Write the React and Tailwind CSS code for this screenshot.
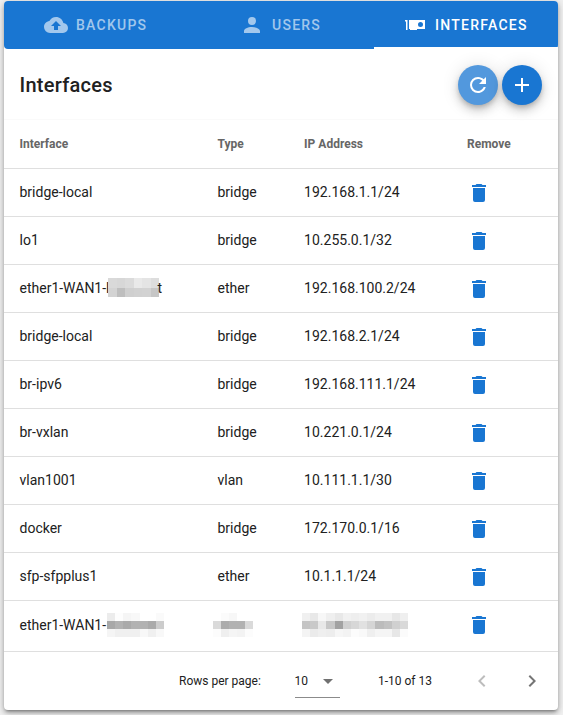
const ICONS = {
  cloud: "M14,13V17H10V13H7L12,8L17,13M19.35,10.03C18.67,6.59 15.64,4 12,4C9.11,4 6.6,5.64 5.35,8.03C2.34,8.36 0,10.9 0,14A6,6 0 0,0 6,20H19A5,5 0 0,0 24,15C24,12.36 21.95,10.22 19.35,10.03Z",
  account: "M12,4A4,4 0 0,1 16,8A4,4 0 0,1 12,12A4,4 0 0,1 8,8A4,4 0 0,1 12,4M12,14C16.42,14 20,15.79 20,18V20H4V18C4,15.79 7.58,14 12,14Z",
  card: "M2,7V8.5H3V17H4.5V7C3.7,7 2.8,7 2,7M6,7V7L6,16H7V17H14V16H22V7H6M17.5,9A2.5,2.5 0 0,1 20,11.5A2.5,2.5 0 0,1 17.5,14A2.5,2.5 0 0,1 15,11.5A2.5,2.5 0 0,1 17.5,9Z",
  refresh: "M17.65,6.35C16.2,4.9 14.21,4 12,4A8,8 0 0,0 4,12A8,8 0 0,0 12,20C15.73,20 18.84,17.45 19.73,14H17.65C16.83,16.33 14.61,18 12,18A6,6 0 0,1 6,12A6,6 0 0,1 12,6C13.66,6 15.14,6.69 16.22,7.78L13,11H20V4L17.65,6.35Z",
  plus: "M19,13H13V19H11V13H5V11H11V5H13V11H19V13Z",
  trash: "M19,4H15.5L14.5,3H9.5L8.5,4H5V6H19M6,19A2,2 0 0,0 8,21H16A2,2 0 0,0 18,19V7H6V19Z",
  left: "M15.41,16.58L10.83,12L15.41,7.41L14,6L8,12L14,18L15.41,16.58Z",
  right: "M8.59,16.58L13.17,12L8.59,7.41L10,6L16,12L10,18L8.59,16.58Z",
  down: "M7,10L12,15L17,10H7Z",
};

function Icon({ name, className = "" }) {
  return (
    <svg viewBox="0 0 24 24" fill="currentColor" className={`size-6 shrink-0 ${className}`}>
      <path d={ICONS[name]} />
    </svg>
  );
}

// Pixelated block that hides a private value; each row lists the grey level of its cells.
function Mosaic({ rows, className }) {
  return (
    <div className={`flex shrink-0 flex-col ${className}`}>
      {rows.map((row, i) => (
        <div key={i} className="flex flex-1">
          {row.map((v, j) => (
            <div key={j} className="flex-1" style={{ backgroundColor: `rgb(${v},${v},${v})` }} />
          ))}
        </div>
      ))}
    </div>
  );
}

const HOST_A = [
  [217, 215, 219, 233, 228, 221],
  [211, 190, 207, 209, 210, 198],
];
const HOST_B = [
  [236, 253, 245, 248, 255, 255, 250],
  [168, 178, 170, 178, 178, 170, 204],
  [245, 240, 240, 240, 248, 240, 248],
];
const TYPE_B = [
  [255, 251, 247, 255, 255],
  [218, 172, 178, 178, 218],
  [252, 239, 245, 243, 252],
];
const IP_B = [
  [240, 232, 247, 239, 232, 241, 238, 241, 236, 241, 241, 231, 239],
  [196, 201, 232, 199, 162, 208, 215, 225, 213, 188, 194, 208, 217],
  [244, 235, 239, 237, 246, 243, 252, 249, 239, 245, 245, 231, 251],
];

const ROWS = [
  ["bridge-local", "bridge", "192.168.1.1/24"],
  ["lo1", "bridge", "10.255.0.1/32"],
  ["ether1", "ether", "192.168.100.2/24"],
  ["bridge-local", "bridge", "192.168.2.1/24"],
  ["br-ipv6", "bridge", "192.168.111.1/24"],
  ["br-vxlan", "bridge", "10.221.0.1/24"],
  ["vlan1001", "vlan", "10.111.1.1/30"],
  ["docker", "bridge", "172.170.0.1/16"],
  ["sfp-sfpplus1", "ether", "10.1.1.1/24"],
];

const GRID = "grid grid-cols-[198px_86.6px_162.9px_1fr] items-center border-b border-[#dfdfdf] pl-[15.5px]";

export default function App() {
  return (
    <div className="h-[715px] w-[563px] overflow-hidden bg-[#f0f0f0] pt-px pl-1 font-[Roboto,sans-serif] text-[#212121]">
      <div className="h-[709px] w-[554px] rounded-[4px] bg-white shadow-[0_3px_3px_-2px_rgba(0,0,0,0.3),0_3px_5px_0_rgba(0,0,0,0.25),0_1px_8px_0_rgba(0,0,0,0.14)]">
        <div className="flex h-12 rounded-[4px] bg-[#1976d2] text-sm font-medium tracking-[1.25px] text-white">
          <div className="flex w-[184px] items-center gap-2 pl-10 text-white/60">
            <Icon name="cloud" />
            <span>BACKUPS</span>
          </div>
          <div className="flex w-[186px] items-center gap-2 pl-[52px] text-white/60">
            <Icon name="account" />
            <span>USERS</span>
          </div>
          <div className="flex flex-1 items-center gap-2 border-b-2 border-white pl-[29px]">
            <Icon name="card" className="mt-0.5" />
            <span className="mt-0.5">INTERFACES</span>
          </div>
        </div>

        <div className="flex h-[71px] items-center gap-1 border-b border-[#fafafa] pt-0.5 pr-4 pl-[15.5px]">
          <h1 className="flex-1 text-xl font-medium tracking-[0.25px]">Interfaces</h1>
          <button className="flex size-10 items-center justify-center rounded-full bg-[#5298dd] text-white shadow-[0_3px_5px_-1px_rgba(0,0,0,0.2),0_6px_10px_0_rgba(0,0,0,0.14),0_1px_18px_0_rgba(0,0,0,0.12)]">
            <Icon name="refresh" />
          </button>
          <button className="flex size-10 items-center justify-center rounded-full bg-[#1976d2] text-white shadow-[0_3px_5px_-1px_rgba(0,0,0,0.2),0_6px_10px_0_rgba(0,0,0,0.14),0_1px_18px_0_rgba(0,0,0,0.12)]">
            <Icon name="plus" />
          </button>
        </div>

        <div className={`${GRID} h-[49px] text-xs font-bold text-[#666666]`}>
          <span>Interface</span>
          <span>Type</span>
          <span>IP Address</span>
          <span>Remove</span>
        </div>

        {ROWS.map(([name, type, ip], i) => (
          <div key={i} className={`${GRID} h-12 pb-0.5 text-sm`}>
            {i === 2 ? (
              <span className="flex items-center">
                <span className="w-[88.5px] shrink-0 whitespace-nowrap">ether1-WAN1-l</span>
                <Mosaic rows={HOST_A} className="h-[19px] w-[51px]" />
                <span className="-ml-[1.5px]">t</span>
              </span>
            ) : (
              <span>{name}</span>
            )}
            <span>{type}</span>
            <span>{ip}</span>
            <Icon name="trash" className="mt-0.5 text-[#1976d2]" />
          </div>
        ))}

        <div className={`${GRID} h-[51px] pb-0.5 text-sm`}>
          <span className="flex items-center">
            <span className="w-[87.5px] shrink-0">ether1-WAN1-</span>
            <Mosaic rows={HOST_B} className="h-6 w-[57px]" />
          </span>
          <Mosaic rows={TYPE_B} className="-ml-[4.5px] h-6 w-10" />
          <Mosaic rows={IP_B} className="-ml-[2.1px] h-6 w-[106px]" />
          <Icon name="trash" className="text-[#1976d2]" />
        </div>

        <div className="flex h-[58px] items-center text-xs">
          <span className="box-content w-[115.5px] pl-[175px] whitespace-nowrap">Rows per page:</span>
          <div className="mt-0.5 flex h-8 w-[45px] items-center justify-between border-b border-[#8b8b8b]">
            <span className="-mt-0.5">10</span>
            <Icon name="down" className="-mt-0.5 text-[#707070]" />
          </div>
          <span className="ml-[38.5px] w-[92px]">1-10 of 13</span>
          <Icon name="left" className="text-[#bdbdbd]" />
          <Icon name="right" className="ml-[26px] text-[#757575]" />
        </div>
      </div>
    </div>
  );
}
